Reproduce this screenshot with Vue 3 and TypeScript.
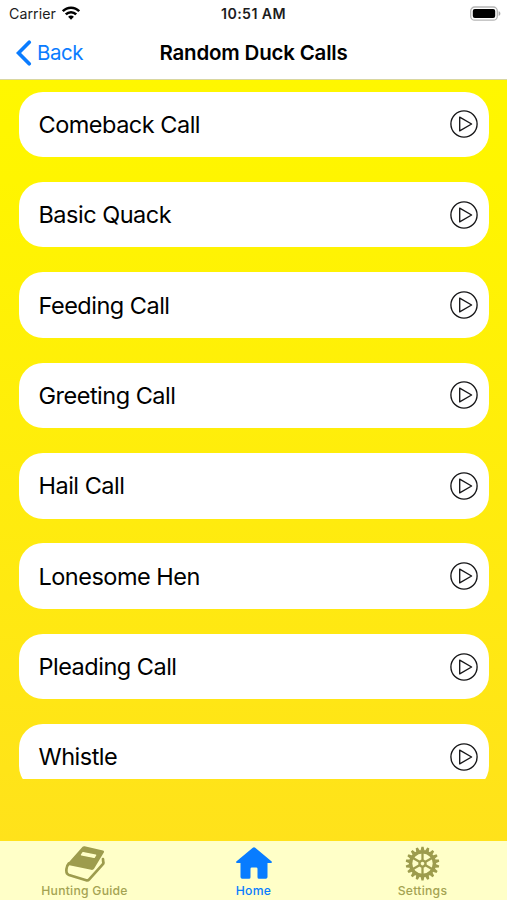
<script setup lang="ts">
const calls: string[] = [
  'Comeback Call',
  'Basic Quack',
  'Feeding Call',
  'Greeting Call',
  'Hail Call',
  'Lonesome Hen',
  'Pleading Call',
  'Whistle',
]
const teeth: number[] = Array.from({ length: 18 }, (_, i) => i * 20)
const spokes: number[] = [0, 60, 120, 180, 240, 300]
</script>

<template>
  <div class="screen">
    <header class="top">
      <div class="status">
        <div class="carrier">
          <span>Carrier</span>
          <svg class="wifi" width="18" height="14" viewBox="0 0 18 14" fill="none" stroke="#000" stroke-width="2.6">
            <path d="M0.8 5.2C5.3.5 12.7.5 17.2 5.2" />
            <path d="M3.8 8.4C6.7 5.5 11.3 5.5 14.2 8.4" />
            <path d="M9 13.7 6.1 10.8C7.7 9.2 10.3 9.2 11.9 10.8Z" fill="#000" stroke="none" />
          </svg>
        </div>
        <span class="time">10:51 AM</span>
        <div class="power">
          <svg width="31" height="16" viewBox="0 0 31 16">
            <rect x="0.7" y="1" width="26.6" height="13.2" rx="4" fill="#fff" stroke="#b5b5b5" stroke-width="1.3" />
            <rect x="2.8" y="3.1" width="22.4" height="9" rx="2" fill="#000" />
            <path d="M28.6 5.3c2.4.7 2.4 3.9 0 4.6z" fill="#aaa" />
          </svg>
        </div>
      </div>
      <nav class="nav">
        <button class="back" type="button">
          <svg width="16" height="26" viewBox="0 0 16 26" fill="none" stroke="#0a7cff" stroke-width="3.7" stroke-linecap="round">
            <path d="M13.2 2.2 2.5 13 13.2 23.8" stroke-linejoin="miter" />
          </svg>
          <span>Back</span>
        </button>
        <h1>Random Duck Calls</h1>
        <span></span>
      </nav>
    </header>

    <main class="list">
      <div v-for="call in calls" :key="call" class="card">
        <span class="name">{{ call }}</span>
        <svg width="28" height="28" viewBox="0 0 28 28" fill="none" stroke="#171719" stroke-width="1.35" stroke-linejoin="round">
          <circle cx="14" cy="14" r="13.1" />
          <path d="M9.7 7.1V20.9L21.6 14Z" />
        </svg>
      </div>
    </main>

    <footer class="tabs">
      <div class="tab">
        <svg width="40" height="37" viewBox="0 0 40 37">
          <path d="M17.6.8Q18.4-.1 19.6.2L38 4.6Q39.6 5.1 38.8 6.5L29.2 22.6Q28.2 24.2 26.2 23.8L4.4 19.3Q2 18.6 3.2 17Z" fill="#9d9c4d" />
          <path d="M3.8 17.5C1.1 20.5.9 25.5 2 27.6Q2.6 28.5 4 29L21.2 34.3Q23 34.8 24.2 33.3L37.9 18.2Q38.8 17 38.2 15.6L38 13" fill="none" stroke="#9d9c4d" stroke-width="2.7" stroke-linecap="round" stroke-linejoin="round" />
          <path d="M18 6.6 30.6 9.2 29.2 11.4 16.5 8.8Z" fill="#ffffc8" stroke="#ffffc8" stroke-width="1.4" stroke-linejoin="round" />
        </svg>
        <span>Hunting Guide</span>
      </div>
      <div class="tab active">
        <svg width="40" height="37" viewBox="0 0 40 37" fill="#087cff">
          <path d="M18.8 1.7Q20 .8 21.2 1.7L37.4 15.3Q38.8 16.8 36.8 17H33.5V31Q33.5 32.7 31.8 32.7H25Q23.5 32.7 23.5 31.2V22.7Q23.5 21.4 22.2 21.4H17.8Q16.5 21.4 16.5 22.7V31.2Q16.5 32.7 15 32.7H8.2Q6.5 32.7 6.5 31V17H3.2Q1.2 16.8 2.6 15.3Z" />
        </svg>
        <span>Home</span>
      </div>
      <div class="tab">
        <svg width="40" height="37" viewBox="0 0 40 37">
          <g transform="translate(19.5 17.6)" fill="none" stroke="#9d9c4d">
            <circle r="11.9" stroke-width="3.4" />
            <path v-for="angle in teeth" :key="angle" d="M-1.9-13-1.1-16.8H1.1L1.9-13Z" fill="#9d9c4d" stroke="none" :transform="`rotate(${angle})`" />
            <path v-for="angle in spokes" :key="`s${angle}`" d="M0-3V-11.5" stroke-width="2.3" :transform="`rotate(${angle})`" />
            <circle r="3" stroke-width="2.4" />
          </g>
        </svg>
        <span>Settings</span>
      </div>
    </footer>
  </div>
</template>

<style>
body {
  margin: 0;
}
</style>

<style scoped>
.screen {
  box-sizing: border-box;
  width: 507px;
  height: 900px;
  display: flex;
  flex-direction: column;
  overflow: hidden;
  color: #000;
  font-family: Inter, 'Liberation Sans', sans-serif;
  background: linear-gradient(#fff700 80px, #fff500 180px, #ffe21b 840px);
}
.top {
  box-sizing: border-box;
  height: 79.5px;
  flex: none;
  background: #fff;
  border-bottom: 1px solid #d9d7a0;
}
.status {
  height: 27px;
  display: grid;
  grid-template-columns: 1fr auto 1fr;
  align-items: center;
  padding: 0 6px 0 9px;
  font-size: 14.2px;
  color: #1c1c1e;
}
.carrier {
  display: flex;
  align-items: center;
  gap: 6px;
  letter-spacing: 0.05px;
}
.wifi {
  margin-top: -2px;
}
.time {
  margin-left: -3px;
  font-weight: 600;
  letter-spacing: 0.4px;
}
.power {
  display: flex;
  justify-content: flex-end;
}
.nav {
  height: 51px;
  display: grid;
  grid-template-columns: 1fr auto 1fr;
  align-items: center;
  padding: 0 16px;
}
.back {
  display: flex;
  align-items: center;
  gap: 5px;
  padding: 0;
  border: 0;
  background: none;
  color: #0a7cff;
  font: inherit;
  font-size: 20.5px;
  letter-spacing: -0.45px;
}
h1 {
  margin: 0;
  font-size: 20.5px;
  font-weight: 600;
  letter-spacing: -0.2px;
}
.list {
  box-sizing: border-box;
  height: 699.5px;
  flex: none;
  display: flex;
  flex-direction: column;
  gap: 24.9px;
  padding: 12px 18.4px 0 19.2px;
  overflow: hidden;
}
.card {
  box-sizing: border-box;
  height: 65.5px;
  flex: none;
  display: flex;
  align-items: center;
  justify-content: space-between;
  padding: 0 10.6px 0 19.3px;
  border-radius: 24px;
  background: #fff;
}
.name {
  font-size: 23.5px;
  letter-spacing: -0.5px;
}
.tabs {
  height: 59.5px;
  flex: none;
  margin-top: auto;
  display: grid;
  grid-template-columns: repeat(3, 1fr);
  background: #ffffc8;
}
.tab {
  display: flex;
  flex-direction: column;
  align-items: center;
  padding-top: 5px;
  color: #a4a352;
  font-size: 12.2px;
  font-weight: 500;
  line-height: 15px;
  letter-spacing: 0.25px;
}
.active {
  color: #087cff;
}
</style>
